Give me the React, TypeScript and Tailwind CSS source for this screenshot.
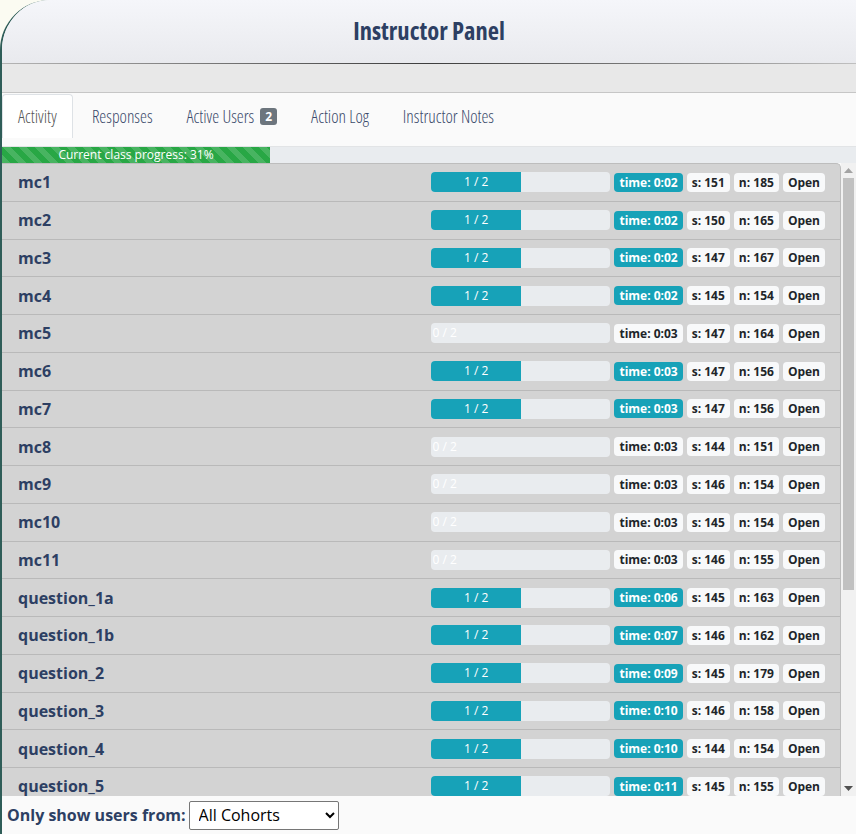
import React from 'react';

type Row = {
  name: string;
  done: number;
  time: string;
  s: number;
  n: number;
};

const rows: Row[] = [
  { name: 'mc1', done: 1, time: '0:02', s: 151, n: 185 },
  { name: 'mc2', done: 1, time: '0:02', s: 150, n: 165 },
  { name: 'mc3', done: 1, time: '0:02', s: 147, n: 167 },
  { name: 'mc4', done: 1, time: '0:02', s: 145, n: 154 },
  { name: 'mc5', done: 0, time: '0:03', s: 147, n: 164 },
  { name: 'mc6', done: 1, time: '0:03', s: 147, n: 156 },
  { name: 'mc7', done: 1, time: '0:03', s: 147, n: 156 },
  { name: 'mc8', done: 0, time: '0:03', s: 144, n: 151 },
  { name: 'mc9', done: 0, time: '0:03', s: 146, n: 154 },
  { name: 'mc10', done: 0, time: '0:03', s: 145, n: 154 },
  { name: 'mc11', done: 0, time: '0:03', s: 146, n: 155 },
  { name: 'question_1a', done: 1, time: '0:06', s: 145, n: 163 },
  { name: 'question_1b', done: 1, time: '0:07', s: 146, n: 162 },
  { name: 'question_2', done: 1, time: '0:09', s: 145, n: 179 },
  { name: 'question_3', done: 1, time: '0:10', s: 146, n: 158 },
  { name: 'question_4', done: 1, time: '0:10', s: 144, n: 154 },
  { name: 'question_5', done: 1, time: '0:11', s: 145, n: 155 },
  { name: 'question_6', done: 1, time: '0:12', s: 143, n: 152 },
  { name: 'question_7', done: 0, time: '0:13', s: 144, n: 150 },
];

const TOTAL = 2;

function Badge({ children, info }: { children: React.ReactNode; info?: boolean }) {
  return (
    <span
      className={
        info
          ? 'ml-[4px] h-[19px] px-[5px] rounded-[4px] bg-[#17a2b8] text-white text-[12px] font-bold leading-[19px] whitespace-nowrap'
          : 'ml-[4px] h-[19px] px-[5px] rounded-[4px] bg-[#f8f9fa] text-[#212529] text-[12px] font-bold leading-[19px] whitespace-nowrap'
      }
    >
      {children}
    </span>
  );
}

function ActivityRow({ row }: { row: Row }) {
  const pct = (row.done / TOTAL) * 100;
  return (
    <div className="flex items-center h-[37.75px] border-b border-[#b9b9b9] pl-4 pr-[15px]">
      <div className="flex-1 text-[16px] font-bold text-[#2d3f63]">{row.name}</div>
      <div className="w-[179px] h-5 rounded-[4px] bg-[#e9ecef] overflow-hidden flex">
        {row.done > 0 ? (
          <div
            className="h-full bg-[#17a2b8] text-white text-[12px] leading-5 text-center"
            style={{ width: `${pct}%` }}
          >
            {row.done} / {TOTAL}
          </div>
        ) : (
          <div className="h-full pl-[1px] text-white text-[12px] leading-5">0 / {TOTAL}</div>
        )}
      </div>
      <Badge info={row.done > 0}>time: {row.time}</Badge>
      <Badge>s: {row.s}</Badge>
      <Badge>n: {row.n}</Badge>
      <Badge>Open</Badge>
    </div>
  );
}

// classic scrollbar look, drawn since the headless window hides native ones
function ScrollBar() {
  return (
    <div className="w-[15px] shrink-0 flex flex-col bg-[#f1f1f1]">
      <div className="h-[15px] flex items-center justify-center">
        <svg width="9" height="5" viewBox="0 0 9 5">
          <path d="M0 5 L4.5 0 L9 5 Z" fill="#a3a3a3" />
        </svg>
      </div>
      <div className="flex-1 pl-[2px] pr-[2px]">
        <div className="h-[412px] bg-[#c1c1c1]" />
      </div>
      <div className="h-[15px] flex items-center justify-center">
        <svg width="9" height="5" viewBox="0 0 9 5">
          <path d="M0 0 L4.5 5 L9 0 Z" fill="#505050" />
        </svg>
      </div>
    </div>
  );
}

const tabs = ['Activity', 'Responses', 'Active Users', 'Action Log', 'Instructor Notes'];

export default function App() {
  return (
    <div className="h-screen bg-[#fbfbf2] font-['Open_Sans',sans-serif]">
      <div className="h-full flex flex-col border-l-2 border-[#2f5d58] rounded-tl-[50px] overflow-hidden bg-[#fafafa]">
        {/* header */}
        <div className="h-[63px] shrink-0 flex items-center justify-center bg-gradient-to-b from-[#f5f6fa] to-[#e9eaee]">
          <h1 className="text-[24.5px] font-bold text-[#2d3f63] [font-stretch:75%]">
            Instructor Panel
          </h1>
        </div>
        <div className="h-px shrink-0 bg-gradient-to-r from-[#b5b5b5] via-[#3d3d3d] to-[#c0c0c0]" />
        <div className="h-[29px] shrink-0 bg-[#e8e8e8] border-b border-[#c6c6c6]" />

        {/* tabs */}
        <div className="h-[54px] shrink-0 flex items-start pt-[1px] bg-[#fafafa] border-b border-[#e2e4e6]">
          {tabs.map((t, i) => (
            <div
              key={t}
              className={
                i === 0
                  ? 'h-[44px] flex items-center px-[15px] mr-[2px] bg-white border border-b-0 border-[#dee2e6] rounded-t-[4px] text-[17.5px] font-light text-[#555] [font-stretch:75%]'
                  : 'h-[44px] flex items-center px-[15px] mx-[2px] text-[17.5px] font-light text-[#3b4a6b] [font-stretch:75%]'
              }
            >
              {t}
              {t === 'Active Users' && (
                <span className="ml-[6px] h-[17px] px-[5px] rounded-[3px] bg-[#6c757d] text-white text-[12px] font-bold leading-[17px] [font-stretch:100%]">
                  2
                </span>
              )}
            </div>
          ))}
        </div>

        {/* class progress */}
        <div className="h-4 shrink-0 bg-[#e9ecef] flex">
          <div className="w-[268px] h-full bg-[#28a745] bg-[linear-gradient(45deg,rgba(255,255,255,0.15)_25%,transparent_25%,transparent_50%,rgba(255,255,255,0.15)_50%,rgba(255,255,255,0.15)_75%,transparent_75%,transparent)] bg-[length:16px_16px] text-white text-[12px] leading-4 text-center">
            Current class progress: 31%
          </div>
        </div>

        {/* activity list */}
        <div className="flex-1 min-h-0 flex">
          <div className="flex-1 min-w-0 overflow-hidden">
            <div className="bg-[#d3d3d3] border-t border-r border-[#bdbdbd] rounded-tr-[5px]">
              {rows.map((r) => (
                <ActivityRow key={r.name} row={r} />
              ))}
            </div>
          </div>
          <ScrollBar />
        </div>

        {/* filter */}
        <div className="h-[38px] shrink-0 flex items-center pl-[5px] bg-[#fafafa]">
          <span className="text-[16px] font-bold text-[#2d3f63]">Only show users from:</span>
          <select className="ml-[3px] w-[150px] h-[29px] pl-[5px] border border-[#767676] bg-white text-[16px] text-black rounded-[2px]">
            <option>All Cohorts</option>
          </select>
        </div>
      </div>
    </div>
  );
}
